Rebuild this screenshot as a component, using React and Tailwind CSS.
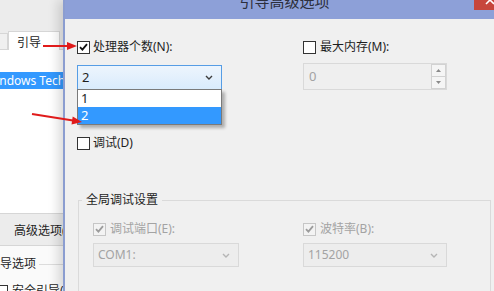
import React from 'react';

const Check = ({ checked, disabled }) => (
  <span
    className={`w-[13px] h-[13px] shrink-0 border flex items-center justify-center ${
      disabled ? 'border-[#c6c6c6] bg-[#f3f3f3]' : 'border-[#333333] bg-white'
    }`}
  >
    {checked && (
      <svg width="9" height="8" viewBox="0 0 9 8">
        <path d="M1 4.2 L3.4 6.6 L8 1.2" fill="none" stroke={disabled ? '#9c9c9c' : '#111111'} strokeWidth="1.8" />
      </svg>
    )}
  </span>
);

const Chevron = ({ color }) => (
  <svg width="8" height="5" viewBox="0 0 8 5">
    <path d="M1 1 L4 4 L7 1" fill="none" stroke={color} strokeWidth="1.4" />
  </svg>
);

const DisabledCombo = ({ value, width }) => (
  <div className={`${width} h-[24px] border border-[#d9d9d9] bg-[#ededed] flex items-center justify-between pl-[4px] pr-[8px] text-[#a3a3a3] text-[12px]`}>
    <span>{value}</span>
    <Chevron color="#b5b5b5" />
  </div>
);

export default function App() {
  return (
    <div className="relative w-[494px] h-[291px] overflow-hidden flex bg-[#efefef] text-[12px] text-[#1e1e1e] font-['Noto_Sans','Noto_Sans_CJK_SC',sans-serif]">
      {/* 背后的窗口 */}
      <div className="w-[63px] shrink-0 flex flex-col overflow-hidden">
        <div className="h-[31px] shrink-0 bg-[#ececec]" />
        <div className="h-[19px] shrink-0 flex items-end bg-[#ececec]">
          <div className="w-[8px] h-[17px] shrink-0 border-t border-r border-b border-[#d6d6d6] bg-[#f0f0f0]" />
          <div className="w-[52px] h-[19px] shrink-0 bg-white border-x border-t border-[#d6d6d6] pl-[8px] pt-[4px] leading-[14px]">
            引导
          </div>
          <div className="flex-1 h-[17px] border-b border-[#d6d6d6]" />
        </div>
        <div className="h-[163px] shrink-0 bg-white pt-[22px]">
          <div className="h-[17px] bg-[#3399ff] text-white whitespace-nowrap overflow-hidden leading-[17px]">
            <span className="ml-[-15px]">Windows Technical Preview</span>
          </div>
        </div>
        <div className="h-[33px] shrink-0 border-y border-[#d6d6d6] bg-[#ececec] flex items-center pl-[14px] pt-[2px] whitespace-nowrap overflow-hidden">
          高级选项(O)...
        </div>
        <div className="flex-1 bg-[#fafafa] pt-[11px] flex flex-col">
          <div className="flex items-center h-[14px] shrink-0 whitespace-nowrap">
            <span className="ml-[-12px]">引导选项</span>
            <div className="flex-1 h-px bg-[#dcdcdc] ml-[3px]" />
          </div>
          <div className="flex items-center gap-[4px] mt-[11px] ml-[-5px] shrink-0 whitespace-nowrap">
            <Check />
            <span>安全引导(F)</span>
          </div>
        </div>
      </div>

      {/* 引导高级选项 对话框 */}
      <div className="w-[447px] shrink-0 relative z-10 flex flex-col border-l-2 border-[#8b9dd0] bg-[#f0f0f0] shadow-[-5px_0_10px_rgba(0,0,0,0.14)]">
        <div className="h-[19px] shrink-0 bg-[#8da0d8] flex items-start overflow-hidden">
          <div className="flex-1 pl-[30px] text-center text-[15px] leading-[15px] mt-[-6px] text-[#2c2f3c]">
            引导高级选项
          </div>
          <svg width="32" height="10" viewBox="0 0 32 10" className="mr-[4px] shrink-0">
            <rect width="32" height="10" fill="#c7463c" />
            <path d="M12 -4 L20 4 M20 -4 L12 4" stroke="#ffffff" strokeWidth="1.6" />
          </svg>
        </div>

        <div className="pl-[12px] pt-[21px] flex flex-col items-start">
          <div className="flex h-[14px] items-center">
            <label className="w-[226px] flex items-center gap-[3px]">
              <Check checked />
              <span>处理器个数(N):</span>
            </label>
            <label className="flex items-center gap-[4px]">
              <Check />
              <span>最大内存(M):</span>
            </label>
          </div>

          <div className="flex items-end mt-[9px]">
            <div className="w-[226px]">
              <div className="relative w-[145px] h-[25px] border border-[#569de5] bg-gradient-to-b from-[#edf5fd] to-[#d9ebfc] flex items-center justify-between pl-[4px] pr-[8px] text-[13px]">
                <span>2</span>
                <Chevron color="#3c3c3c" />
                <div className="absolute left-[-1px] right-[-1px] top-full border border-[#7a7a7a] bg-white shadow-[3px_3px_3px_rgba(0,0,0,0.28)] text-[13px]">
                  <div className="h-[17px] leading-[17px] pl-[3px]">1</div>
                  <div className="h-[17px] leading-[17px] pl-[3px] bg-[#3399ff] text-white">2</div>
                </div>
              </div>
            </div>
            <div className="w-[144px] h-[27px] border border-[#d9d9d9] bg-[#efefef] flex items-stretch">
              <div className="flex-1 flex items-center pl-[5px] text-[#a3a3a3] text-[13px]">0</div>
              <div className="w-[15px] flex flex-col">
                <div className="flex-1 border border-[#d2d2d2] bg-[#f5f5f5] flex items-center justify-center">
                  <svg width="5" height="3" viewBox="0 0 5 3"><path d="M0 3 L2.5 0 L5 3 Z" fill="#8a8a8a" /></svg>
                </div>
                <div className="flex-1 border border-t-0 border-[#d2d2d2] bg-[#f5f5f5] flex items-center justify-center">
                  <svg width="5" height="3" viewBox="0 0 5 3"><path d="M0 0 L2.5 3 L5 0 Z" fill="#8a8a8a" /></svg>
                </div>
              </div>
            </div>
          </div>

          <label className="flex h-[14px] items-center gap-[3px] mt-[46px]">
            <Check />
            <span>调试(D)</span>
          </label>

          <fieldset className="w-[413px] ml-[1px] mt-[43px] border border-[#dadada] pl-[14px] pt-[15px] pb-[40px]">
            <legend className="ml-[-11px] px-[4px] leading-[14px] text-[#1e1e1e]">全局调试设置</legend>
            <div className="flex h-[14px] items-center text-[#a3a3a3]">
              <label className="w-[210px] flex items-center gap-[4px]">
                <Check checked disabled />
                <span>调试端口(E):</span>
              </label>
              <label className="flex items-center gap-[4px]">
                <Check checked disabled />
                <span>波特率(B):</span>
              </label>
            </div>
            <div className="flex mt-[7px]">
              <div className="w-[210px]">
                <DisabledCombo value="COM1:" width="w-[146px]" />
              </div>
              <DisabledCombo value="115200" width="w-[144px]" />
            </div>
          </fieldset>
        </div>
      </div>

      {/* 红色标注箭头 */}
      <svg className="absolute inset-0 z-20 pointer-events-none" width="494" height="291" viewBox="0 0 494 291">
        <line x1="43" y1="46" x2="69" y2="46" stroke="#e01b1b" strokeWidth="2" />
        <polygon points="67,42 77,46 67,50" fill="#e01b1b" />
        <line x1="32" y1="114" x2="73" y2="120.5" stroke="#e01b1b" strokeWidth="2" />
        <polygon points="82,122 72.7,116.4 71.5,124.4" fill="#e01b1b" />
      </svg>
    </div>
  );
}
